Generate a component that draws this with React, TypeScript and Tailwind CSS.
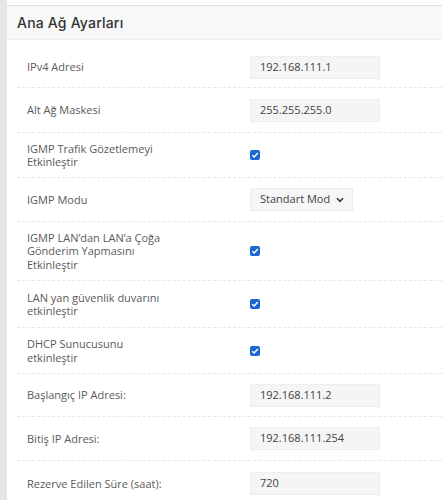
import React from "react";

type Row =
  | { kind: "input"; label: string[]; value: string; h: string }
  | { kind: "check"; label: string[]; h: string }
  | { kind: "select"; label: string[]; value: string; h: string };

const rows: Row[] = [
  { kind: "input", label: ["IPv4 Adresi"], value: "192.168.111.1", h: "h-[41px]" },
  { kind: "input", label: ["Alt Ağ Maskesi"], value: "255.255.255.0", h: "h-[45px]" },
  { kind: "check", label: ["IGMP Trafik Gözetlemeyi", "Etkinleştir"], h: "h-[45px]" },
  { kind: "select", label: ["IGMP Modu"], value: "Standart Mod", h: "h-[44px]" },
  {
    kind: "check",
    label: ["IGMP LAN’dan LAN’a Çoğa", "Gönderim Yapmasını", "Etkinleştir"],
    h: "h-[59px]",
  },
  { kind: "check", label: ["LAN yan güvenlik duvarını", "etkinleştir"], h: "h-[47px]" },
  { kind: "check", label: ["DHCP Sunucusunu", "etkinleştir"], h: "h-[46px]" },
  { kind: "input", label: ["Başlangıç IP Adresi:"], value: "192.168.111.2", h: "h-[43px]" },
  { kind: "input", label: ["Bitiş IP Adresi:"], value: "192.168.111.254", h: "h-[44px]" },
  { kind: "input", label: ["Rezerve Edilen Süre (saat):"], value: "720", h: "h-[46px]" },
];

const Checkbox = () => (
  <span className="w-[10px] h-[10px] rounded-[2px] bg-[#1b68d1] flex items-center justify-center">
    <svg width="8" height="8" viewBox="0 0 8 8">
      <path d="M1.3 4.2 L3.2 6 L6.8 1.9" fill="none" stroke="#fff" strokeWidth="1.5" />
    </svg>
  </span>
);

export default function App() {
  return (
    <div
      className="w-[442px] h-[500px] bg-white flex overflow-hidden"
      style={{ fontFamily: '"Open Sans", "Noto Sans", sans-serif' }}
    >
      <div className="w-[7px] shrink-0 bg-[#e5e5e5]" />
      <div className="flex-1 pt-[5px]">
        <div className="h-[35px] border-t border-[#dcdcdc] border-b border-b-[#efefef] bg-[#f8f8f8] px-[10px] flex items-center">
          <h1
            className="text-[14px] font-medium text-[#333] tracking-[0.2px]"
            style={{ fontFamily: "Inter, sans-serif" }}
          >
            Ana Ağ Ayarları
          </h1>
        </div>
        <div className="pl-[10px] pt-[7px]">
          {rows.map((r, i) => (
            <div
              key={i}
              className={`${r.h} flex items-center border-b border-dashed border-[#e6e6e6]`}
            >
              <div className="w-[233px] shrink-0 pl-[10px] text-[11px] leading-[13.5px] text-[#5a5a5a] whitespace-nowrap">
                {r.label.map((l, j) => (
                  <div key={j}>{l}</div>
                ))}
              </div>
              {r.kind === "input" && (
                <div className="w-[130px] h-[23px] bg-[#f5f5f5] border border-[#eeeeee] px-[9px] flex items-center text-[11px] text-[#444]">
                  {r.value}
                </div>
              )}
              {r.kind === "check" && <Checkbox />}
              {r.kind === "select" && (
                <div className="w-[103px] h-[23px] bg-[#f6f6f6] border border-[#eeeeee] pl-[9px] pr-[8px] flex items-center justify-between text-[11px] text-[#444]">
                  <span>{r.value}</span>
                  <svg width="8" height="6" viewBox="0 0 8 6">
                    <path d="M1 1.3 L4 4.3 L7 1.3" fill="none" stroke="#333" strokeWidth="1.6" />
                  </svg>
                </div>
              )}
            </div>
          ))}
        </div>
      </div>
    </div>
  );
}
